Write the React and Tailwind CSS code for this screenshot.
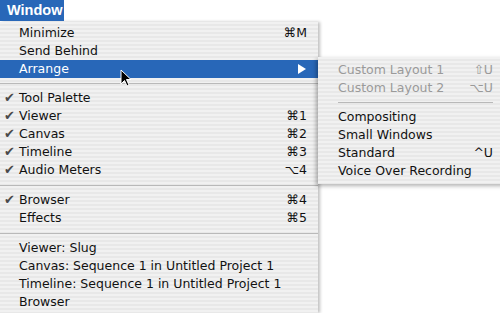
import React from "react";

const stripes =
  "bg-[repeating-linear-gradient(180deg,#f1f1f1_0px,#f1f1f1_2px,#e8e8e8_2px,#e8e8e8_4px)]";

function Item({ label, shortcut, checked, active, arrow, dim }) {
  return (
    <div
      className={`flex items-center h-[18px] pl-[19px] pr-[11px] relative ${
        active ? "bg-[#2867b8] text-white" : dim ? "text-[#9a9a9a]" : "text-[#111]"
      }`}
    >
      {checked && (
        <span className="absolute left-[4px] top-0 text-[13px] text-[#4a4a4a]">✔</span>
      )}
      <span className="flex-1 whitespace-nowrap">{label}</span>
      {shortcut && <span className="whitespace-nowrap">{shortcut}</span>}
      {arrow && (
        <svg width="8" height="10" viewBox="0 0 8 10" className="mr-[1px]">
          <path d="M0 0 L8 5 L0 10 Z" fill="white" />
        </svg>
      )}
    </div>
  );
}

function Sep({ h = "h-[11px]" }) {
  return (
    <div className={`${h} flex items-center`}>
      <div className="w-full h-px bg-[#b9b9b9]" />
    </div>
  );
}

export default function App() {
  return (
    <div
      className="relative w-[500px] h-[313px] bg-white overflow-hidden text-[12.5px] leading-[18px]"
      style={{ fontFamily: '"DejaVu Sans", sans-serif' }}
    >
      <div className="h-[22px] flex">
        <div className="w-[64px] h-[21px] bg-[#2867b8] text-white font-bold text-[14.5px] leading-[21px] pl-[7px] whitespace-nowrap font-['Liberation_Sans',sans-serif]">
          Window
        </div>
      </div>

      <div className={`w-[318px] h-[291px] pt-[2px] ${stripes} shadow-[2px_0_3px_rgba(0,0,0,0.25)]`}>
        <Item label="Minimize" shortcut="⌘M" />
        <Item label="Send Behind" />
        <Item label="Arrange" active arrow />
        <Sep />
        <Item label="Tool Palette" checked />
        <Item label="Viewer" shortcut="⌘1" checked />
        <Item label="Canvas" shortcut="⌘2" checked />
        <Item label="Timeline" shortcut="⌘3" checked />
        <Item label="Audio Meters" shortcut="⌥4" checked />
        <Sep h="h-[12px]" />
        <Item label="Browser" shortcut="⌘4" checked />
        <Item label="Effects" shortcut="⌘5" />
        <Sep h="h-[12px]" />
        <Item label="Viewer: Slug" />
        <Item label="Canvas: Sequence 1 in Untitled Project 1" />
        <Item label="Timeline: Sequence 1 in Untitled Project 1" />
        <Item label="Browser" />
      </div>

      <div
        className={`absolute left-[318px] top-[57px] w-[190px] pt-[4px] pb-[4px] ${stripes} shadow-[-2px_2px_4px_rgba(0,0,0,0.3)]`}
      >
        <div className="[&>div]:pl-[20px] [&>div]:pr-[15px]">
          <Item label="Custom Layout 1" shortcut="⇧U" dim />
          <Item label="Custom Layout 2" shortcut="⌥U" dim />
          <Sep />
          <Item label="Compositing" />
          <Item label="Small Windows" />
          <Item label="Standard" shortcut="^U" />
          <Item label="Voice Over Recording" />
        </div>
      </div>

      <svg
        className="absolute left-[120px] top-[69px]"
        width="12"
        height="19"
        viewBox="0 0 12 19"
      >
        <path
          d="M1 1 L1 15 L4.5 11.5 L7 17 L9 16 L6.5 10.5 L11 10.5 Z"
          fill="black"
          stroke="white"
          strokeWidth="1"
        />
      </svg>
    </div>
  );
}
